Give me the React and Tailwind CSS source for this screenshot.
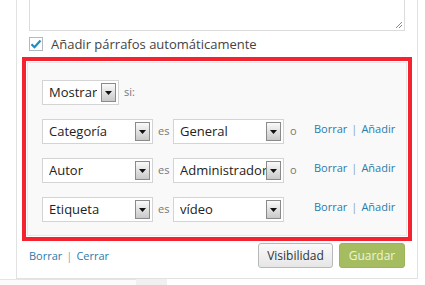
import React from "react";

const font = { fontFamily: '"Open Sans", "Noto Sans", sans-serif' };

const Arrow = () => (
  <span className="flex h-[19px] w-[15px] shrink-0 items-center justify-center border border-[#8a8a8a] bg-gradient-to-b from-[#fafafa] to-[#c9c9c9]">
    <svg width="7" height="4" viewBox="0 0 7 4">
      <path d="M0 0h7L3.5 4z" fill="#111" />
    </svg>
  </span>
);

const Select = ({ value, w }) => (
  <div
    className={`flex h-[25px] items-center justify-between border border-[#d4d4d4] bg-white pl-[6px] pr-[2px] ${w}`}
  >
    <span className="min-w-0 overflow-hidden whitespace-nowrap text-[13px] leading-[19px] text-[#222]">
      {value}
    </span>
    <Arrow />
  </div>
);

const Links = ({ a, b }) => (
  <div className="flex items-center gap-[4px] text-[11px] text-[#2b7bab]">
    <span>{a}</span>
    <span className="text-[#8aa5b8]">|</span>
    <span>{b}</span>
  </div>
);

const Row = ({ field, value, or }) => (
  <div className="flex items-center">
    <Select value={field} w="w-[111px]" />
    <span className="ml-[5px] w-[15px] text-[11px] text-[#777]">es</span>
    <Select value={value} w="w-[111px]" />
    <span className="ml-[6px] w-[18px] text-[11px] text-[#777]">{or ? "o" : ""}</span>
    <div className="ml-[6px] mt-[-4px]">
      <Links a="Borrar" b="Añadir" />
    </div>
  </div>
);

export default function App() {
  return (
    <div className="h-[285px] w-[425px] overflow-hidden bg-white" style={font}>
      <div className="ml-[16px] w-[402px] border-x border-b border-[#e2e2e2] bg-white px-[5px] pb-[10px]">
        <div className="px-[7px]">
          <div className="relative h-[31px] border-x border-b border-[#dcdcdc] bg-white">
            <svg className="absolute bottom-[2px] right-[2px]" width="7" height="7" viewBox="0 0 7 7">
              <path d="M1 7L7 1M4 7L7 4" stroke="#888" strokeWidth="1" />
            </svg>
          </div>
          <div className="mt-[6px] flex h-[14px] items-center gap-[8px]">
            <span className="flex h-[14px] w-[14px] items-center justify-center border border-[#b4b9be] bg-white">
              <svg width="12" height="10" viewBox="0 0 12 10">
                <path d="M1.5 5.2l3 3L10.5 1.5" stroke="#1e8cbe" strokeWidth="2.2" fill="none" />
              </svg>
            </span>
            <span className="text-[13px] leading-none text-[#444]">Añadir párrafos automáticamente</span>
          </div>
        </div>

        <div className="mt-[6px] border-[4px] border-[#f5232f] bg-white p-px">
          <div className="flex flex-col gap-[14px] border border-[#e8e8e8] bg-[#f9f9f9] pb-[13px] pl-[14px] pt-[17px]">
            <div className="flex items-center">
              <Select value="Mostrar" w="w-[77px]" />
              <span className="ml-[5px] text-[11px] text-[#777]">si:</span>
            </div>
            <Row field="Categoría" value="General" or />
            <Row field="Autor" value="Administrador" or />
            <Row field="Etiqueta" value="vídeo" />
          </div>
        </div>

        <div className="mt-[2px] flex items-center justify-between pl-[7px] pr-[7px]">
          <div className="mt-[1px]">
            <Links a="Borrar" b="Cerrar" />
          </div>
          <div className="flex gap-[6px]">
            <button className="h-[25px] w-[75px] rounded-[3px] border border-[#b8b8b8] bg-gradient-to-b from-[#fafafa] to-[#e6e6e6] text-[12px] text-[#333]">
              Visibilidad
            </button>
            <button className="h-[25px] w-[66px] rounded-[3px] border border-[#9cb45a] bg-[#a5bd60] text-[12px] text-[#eef3dc]">
              Guardar
            </button>
          </div>
        </div>
      </div>
      <div className="flex h-[8px]">
        <div className="w-[136px] border-t border-[#e5e5e5] bg-[#fbfbfb]" />
        <div className="w-[31px] bg-[#f0f0f0]" />
      </div>
    </div>
  );
}
